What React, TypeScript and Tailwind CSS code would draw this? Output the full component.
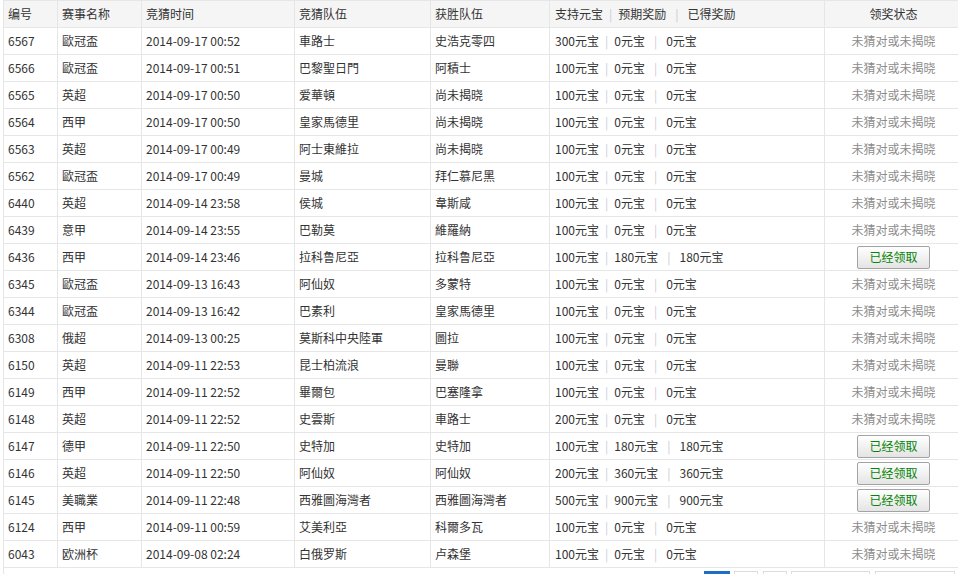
import React from "react";

type Row = {
  id: string;
  league: string;
  time: string;
  team: string;
  winner: string;
  bet: string;
  expect: string;
  got: string;
  claimed: boolean;
};

const raw: [string, string, string, string, string, string, string, string, boolean][] = [
  ["6567", "歐冠盃", "2014-09-17 00:52", "車路士", "史浩克零四", "300", "0", "0", false],
  ["6566", "歐冠盃", "2014-09-17 00:51", "巴黎聖日門", "阿積士", "100", "0", "0", false],
  ["6565", "英超", "2014-09-17 00:50", "爱華頓", "尚未揭晓", "100", "0", "0", false],
  ["6564", "西甲", "2014-09-17 00:50", "皇家馬德里", "尚未揭晓", "100", "0", "0", false],
  ["6563", "英超", "2014-09-17 00:49", "阿士東維拉", "尚未揭晓", "100", "0", "0", false],
  ["6562", "歐冠盃", "2014-09-17 00:49", "曼城", "拜仁慕尼黑", "100", "0", "0", false],
  ["6440", "英超", "2014-09-14 23:58", "侯城", "韋斯咸", "100", "0", "0", false],
  ["6439", "意甲", "2014-09-14 23:55", "巴勒莫", "維羅納", "100", "0", "0", false],
  ["6436", "西甲", "2014-09-14 23:46", "拉科鲁尼亞", "拉科鲁尼亞", "100", "180", "180", true],
  ["6345", "歐冠盃", "2014-09-13 16:43", "阿仙奴", "多蒙特", "100", "0", "0", false],
  ["6344", "歐冠盃", "2014-09-13 16:42", "巴素利", "皇家馬德里", "100", "0", "0", false],
  ["6308", "俄超", "2014-09-13 00:25", "莫斯科中央陸軍", "圖拉", "100", "0", "0", false],
  ["6150", "英超", "2014-09-11 22:53", "昆士柏流浪", "曼聯", "100", "0", "0", false],
  ["6149", "西甲", "2014-09-11 22:52", "畢爾包", "巴塞隆拿", "100", "0", "0", false],
  ["6148", "英超", "2014-09-11 22:52", "史雲斯", "車路士", "200", "0", "0", false],
  ["6147", "德甲", "2014-09-11 22:50", "史特加", "史特加", "100", "180", "180", true],
  ["6146", "英超", "2014-09-11 22:50", "阿仙奴", "阿仙奴", "200", "360", "360", true],
  ["6145", "美職業", "2014-09-11 22:48", "西雅圖海灣者", "西雅圖海灣者", "500", "900", "900", true],
  ["6124", "西甲", "2014-09-11 00:59", "艾美利亞", "科爾多瓦", "100", "0", "0", false],
  ["6043", "欧洲杯", "2014-09-08 02:24", "白俄罗斯", "卢森堡", "100", "0", "0", false],
];

const rows: Row[] = raw.map(([id, league, time, team, winner, bet, expect, got, claimed]) => ({
  id,
  league,
  time,
  team,
  winner,
  bet,
  expect,
  got,
  claimed,
}));

const cell = "h-[27px] border-l border-b border-[#e6e6e6] flex items-center pl-[4px] whitespace-nowrap overflow-hidden";

function Money({ a, b, c }: { a: string; b: string; c: string }) {
  return (
    <span className="whitespace-nowrap">
      {a}
      <span className="mx-[6px] text-[#c8ccd2]">|</span>
      {b}
      <span className="ml-[9px] mr-[9px] text-[#c8ccd2]">|</span>
      {c}
    </span>
  );
}

export default function App() {
  return (
    <div
      className="w-[958px] h-[574px] overflow-hidden bg-white text-[12px] text-[#333]"
      style={{ fontFamily: '"Noto Sans CJK SC", "Microsoft YaHei", sans-serif' }}
    >
      <div className="pl-[3px]">
        <div className="border-l border-[#e6e6e6] w-[957px]">
          <div className="grid grid-cols-[54px_84px_153px_136px_119px_275px_134px] -ml-px">
            <div className={`${cell} bg-[#f5f5f5] border-t h-[28px]`}>编号</div>
            <div className={`${cell} bg-[#f5f5f5] border-t h-[28px]`}>赛事名称</div>
            <div className={`${cell} bg-[#f5f5f5] border-t h-[28px]`}>竞猜时间</div>
            <div className={`${cell} bg-[#f5f5f5] border-t h-[28px]`}>竞猜队伍</div>
            <div className={`${cell} bg-[#f5f5f5] border-t h-[28px]`}>获胜队伍</div>
            <div className={`${cell} bg-[#f5f5f5] border-t h-[28px] pl-[5px]`}>
              <Money a="支持元宝" b="预期奖励" c="已得奖励" />
            </div>
            <div className={`${cell} bg-[#f5f5f5] border-t h-[28px] justify-center pl-0`}>领奖状态</div>

            {rows.map((r) => (
              <React.Fragment key={r.id}>
                <div className={cell}>{r.id}</div>
                <div className={cell}>{r.league}</div>
                <div className={cell}>{r.time}</div>
                <div className={cell}>{r.team}</div>
                <div className={cell}>{r.winner}</div>
                <div className={`${cell} pl-[5px]`}>
                  <Money a={`${r.bet}元宝`} b={`${r.expect}元宝`} c={`${r.got}元宝`} />
                </div>
                <div className={`${cell} justify-center pl-0`}>
                  {r.claimed ? (
                    <span className="w-[73px] h-[23px] flex items-center justify-center border border-[#a3a3a3] rounded-[2px] bg-gradient-to-b from-white to-[#e4e4e4] text-[#078407]">
                      已经领取
                    </span>
                  ) : (
                    <span className="text-[#8c8c8c]">未猜对或未揭晓</span>
                  )}
                </div>
              </React.Fragment>
            ))}
          </div>
          <div className="flex justify-end gap-[4px] pt-[3px] pr-[5px]">
            <span className="w-[26px] h-[26px] bg-[#1e6fc8] border border-[#1e6fc8]" />
            <span className="w-[24px] h-[26px] border border-[#ddd] mr-[1px]" />
            <span className="w-[24px] h-[26px] border border-[#ddd]" />
            <span className="w-[79px] h-[26px] border border-[#ddd] mr-[1px]" />
            <span className="w-[80px] h-[26px] border border-[#ddd]" />
          </div>
        </div>
      </div>
    </div>
  );
}
